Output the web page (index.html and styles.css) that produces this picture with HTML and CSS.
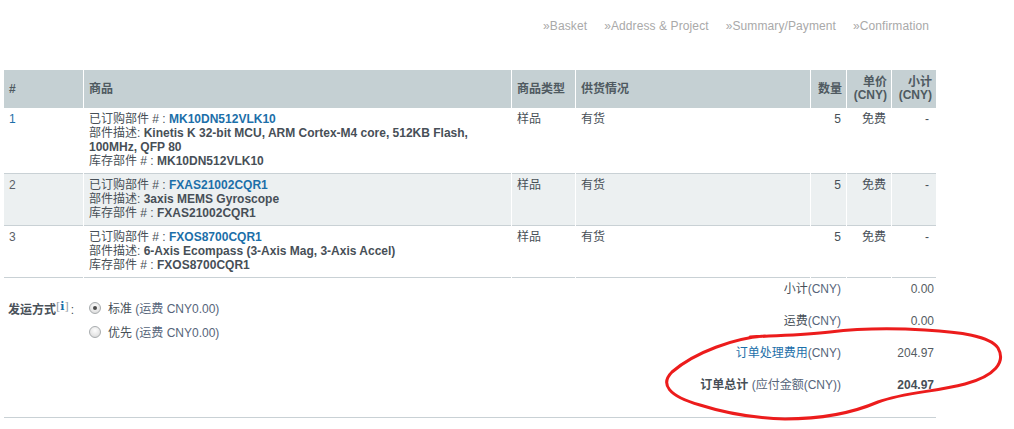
FILE: index.html
```html
<!DOCTYPE html>
<html lang="zh">
<head>
<meta charset="utf-8">
<link rel="stylesheet" href="styles.css">
</head>
<body>
<div class="page">
  <nav class="steps">
    <span class="step">»Basket</span>
    <span class="step">»Address &amp; Project</span>
    <span class="step">»Summary/Payment</span>
    <span class="step">»Confirmation</span>
  </nav>

  <table class="cart">
    <colgroup>
      <col class="c-num"><col class="c-item"><col class="c-type"><col class="c-stock"><col class="c-qty"><col class="c-price"><col class="c-sub">
    </colgroup>
    <thead>
      <tr>
        <th>#</th>
        <th>商品</th>
        <th>商品类型</th>
        <th>供货情况</th>
        <th class="r">数量</th>
        <th class="r">单价<br>(CNY)</th>
        <th class="r">小计<br>(CNY)</th>
      </tr>
    </thead>
    <tbody>
      <tr>
        <td><span class="link">1</span></td>
        <td><div class="ln">已订购部件 # : <span class="link b">MK10DN512VLK10</span></div><div class="ln">部件描述: <b>Kinetis K 32-bit MCU, ARM Cortex-M4 core, 512KB Flash,</b></div><div class="ln"><b>100MHz, QFP 80</b></div><div class="ln">库存部件 # : <b>MK10DN512VLK10</b></div></td>
        <td>样品</td>
        <td>有货</td>
        <td class="r">5</td>
        <td class="r">免费</td>
        <td class="r dash">-</td>
      </tr>
      <tr class="alt">
        <td>2</td>
        <td><div class="ln">已订购部件 # : <span class="link b">FXAS21002CQR1</span></div><div class="ln">部件描述: <b>3axis MEMS Gyroscope</b></div><div class="ln">库存部件 # : <b>FXAS21002CQR1</b></div></td>
        <td>样品</td>
        <td>有货</td>
        <td class="r">5</td>
        <td class="r">免费</td>
        <td class="r dash">-</td>
      </tr>
      <tr>
        <td>3</td>
        <td><div class="ln">已订购部件 # : <span class="link b">FXOS8700CQR1</span></div><div class="ln">部件描述: <b>6-Axis Ecompass (3-Axis Mag, 3-Axis Accel)</b></div><div class="ln">库存部件 # : <b>FXOS8700CQR1</b></div></td>
        <td>样品</td>
        <td>有货</td>
        <td class="r">5</td>
        <td class="r">免费</td>
        <td class="r dash">-</td>
      </tr>
    </tbody>
  </table>

  <div class="summary">
    <div class="shipping">
      <div class="ship-label"><b>发运方式</b><span class="info">[<span class="i">i</span>]</span>:</div>
      <div class="options">
        <div class="opt"><span class="radio on"></span><span>标准 <span class="fee">(运费 CNY0.00)</span></span></div>
        <div class="opt"><span class="radio"></span><span>优先 <span class="fee">(运费 CNY0.00)</span></span></div>
      </div>
    </div>
    <div class="totals">
      <div class="lbl">小计<span class="fee">(CNY)</span></div><div class="val">0.00</div>
      <div class="lbl">运费<span class="fee">(CNY)</span></div><div class="val">0.00</div>
      <div class="lbl"><span class="link">订单处理费用</span><span class="fee">(CNY)</span></div><div class="val">204.97</div>
      <div class="lbl"><b>订单总计</b> <span class="fee">(应付金额(CNY))</span></div><div class="val"><b>204.97</b></div>
    </div>
  </div>

  <svg class="annot" width="1014" height="429" viewBox="0 0 1014 429">
    <path d="M 765 336 C 735 338, 695 352, 672 372 C 660 384, 668 396, 700 405 C 725 413, 750 418, 785 419 C 820 419, 850 414, 878 402 C 905 392, 935 392, 965 384 C 995 376, 1006 362, 998 348 C 990 336, 960 332, 925 330 C 890 328, 855 329, 830 332 C 805 335, 790 335, 750 337" fill="none" stroke="#ec1c1c" stroke-width="3" stroke-linecap="round"/>
  </svg>
</div>
</body>
</html>
```

FILE: styles.css
```css
html, body {
  margin: 0;
  padding: 0;
  background: #ffffff;
}

body {
  font-family: "Liberation Sans", Arial, "Noto Sans CJK SC", sans-serif;
  font-size: 12px;
  line-height: 14px;
  color: #474f57;
}

.page {
  position: relative;
  width: 1014px;
  height: 429px;
  overflow: hidden;
}

.steps {
  display: flex;
  justify-content: flex-end;
  gap: 17px;
  width: 929px;
  padding-top: 19px;
  height: 70px;
  box-sizing: border-box;
  color: #a9a9a9;
}

.step { letter-spacing: 0.1px; }

.cart {
  margin-left: 3px;
  width: 934px;
  table-layout: fixed;
  border-collapse: separate;
  border-spacing: 1px 0;
}

.c-num { width: 79px; }
.c-item { width: 427px; }
.c-type { width: 63px; }
.c-stock { width: 234px; }
.c-qty { width: 35px; }
.c-price { width: 44px; }
.c-sub { width: 44px; }

.cart th {
  background: #c5d0d3;
  color: #4f5a61;
  font-weight: bold;
  text-align: left;
  height: 38px;
  padding: 0 5px;
  box-sizing: border-box;
  line-height: 13px;
  vertical-align: middle;
}

.cart th.r { text-align: right; padding-right: 4px; }

.cart td {
  padding: 4px 5px 5px;
  vertical-align: top;
  border-bottom: 1px solid #c9d1d5;
  color: #474f57;
}

.ln { line-height: 14px; white-space: nowrap; }

.cart td.r { text-align: right; }
.cart td.dash { padding-right: 7px; }

.cart tr.alt td { background: #ecf0f1; }
.cart tr.alt td:first-child { color: #5a6068; }
.cart tbody tr:last-child td:first-child { color: #5a6068; }

.link { color: #1c6fa9; }
.b { font-weight: bold; }
b { color: #474f57; }

.summary {
  display: flex;
  margin-left: 4px;
  width: 932px;
  height: 140px;
  box-sizing: border-box;
  border-bottom: 1px solid #c9d1d5;
}

.shipping {
  display: flex;
  flex: 1;
  padding-top: 24px;
  padding-left: 4px;
}

.ship-label {
  width: 80px;
  line-height: 14px;
  padding-top: 1px;
}

.ship-label b { color: #4a525a; }

.info {
  color: #9aa2a8;
  position: relative;
  top: -4px;
  margin-right: 2px;
  font-family: "DejaVu Serif", serif;
  font-size: 11px;
}

.info .i {
  color: #1c6fa9;
  font-weight: bold;
}

.options {
  display: flex;
  flex-direction: column;
  gap: 10px;
}

.opt {
  display: flex;
  align-items: center;
  gap: 7px;
  line-height: 14px;
}

.radio {
  width: 12px;
  height: 12px;
  border-radius: 50%;
  border: 1px solid #a8acae;
  background: radial-gradient(circle at 50% 35%, #fdfdfd 0%, #e6e6e6 60%, #d0d0d0 100%);
  box-sizing: border-box;
  position: relative;
  top: -1px;
  margin-left: 1px;
}

.radio.on::after {
  content: "";
  position: absolute;
  left: 3px;
  top: 3px;
  width: 4px;
  height: 4px;
  border-radius: 50%;
  background: #4c4c4c;
}

.fee { color: #56657a; }

.totals {
  display: grid;
  grid-template-columns: 260px 88px;
  grid-auto-rows: 32px;
  margin-right: 2px;
}

.lbl {
  text-align: right;
  padding-top: 4px;
  padding-right: 5px;
  line-height: 14px;
}

.val {
  text-align: right;
  padding-top: 4px;
  line-height: 14px;
  color: #555c62;
}

.annot {
  position: absolute;
  left: 0;
  top: 0;
  pointer-events: none;
}
```
